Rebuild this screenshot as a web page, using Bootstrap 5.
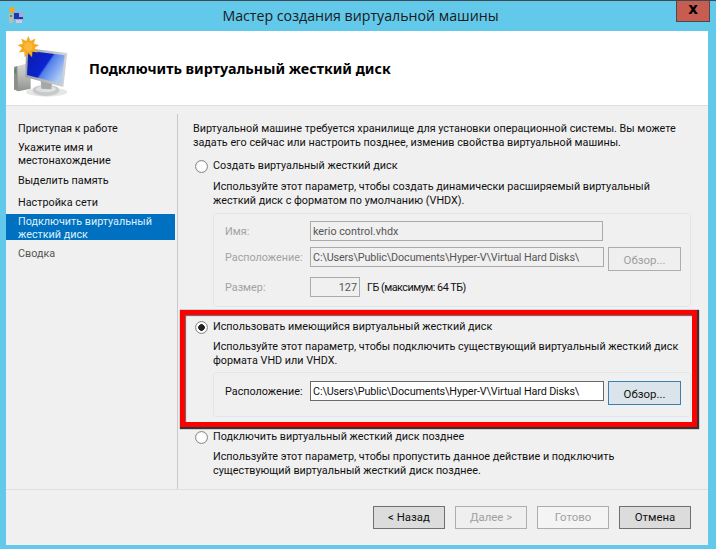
<!doctype html>
<html lang="ru"><head><meta charset="utf-8"><title>Мастер</title>
<link href="https://cdn.jsdelivr.net/npm/bootstrap@5.3.0/dist/css/bootstrap.min.css" rel="stylesheet">
<style>
html,body{height:549px;overflow:hidden}
body{background:#62c9ea;font-family:Roboto,"Noto Sans",sans-serif;font-size:10.8px;line-height:14px;color:#111;border-top:1px solid #3f4a50}
.wiz-title{height:30px;position:relative}
.wiz-title .ttl{font-size:14.2px;line-height:30px;text-align:center;padding-left:5px;color:#1a1a1a;font-family:"Open Sans",sans-serif}
.wiz-ico{position:absolute;left:8px;top:5px}
.wiz-close{position:absolute;left:676px;top:-1px;width:34px;height:22px;background:#c75c50;border:1px solid #4a4a4a;border-top:0;color:#000;font:bold 15px/18px "DejaVu Sans",sans-serif;text-align:center}
.wiz-client{margin:0 8px 0 6px;height:514px;background:#f0f0f0}
.wiz-head{height:75px;background:#fff;border-bottom:1px solid #dfdfdf;padding:2px 0 0 83px;font-family:"Noto Sans",sans-serif;font-size:14.3px;font-weight:700;color:#000}
.wiz-head svg{position:absolute;left:10px;top:32px;filter:blur(.35px)}
.wiz-body{height:383px}
.wiz-side{width:172px;border-right:1px solid #c9c9c9;margin-top:8px;padding-top:8px}
.side-i{padding:0 0 0 12px;margin-bottom:0}
.side-i.two{line-height:13px}
.side-i.on{background:#0070c0;color:#dff0fb;margin-right:2px;height:26px;padding-top:1px}
.side-off{color:#555}
.wiz-main{padding:16px 0 0 15px;width:512px}
.rad{width:13px;height:13px;border-radius:50%;border:1px solid #8a8a8a;background:#fff;flex:none;margin:0 5px 0 2px;box-shadow:inset 0 0 1px #aaa}
.rad.sel{background:radial-gradient(circle,#222 0 3px,#fff 3.6px)}
.optn{height:14px}
.sub{margin-left:20px;white-space:nowrap}
.panel{margin-left:20px;border:1px solid #dfe7ee;border-radius:3px;width:478px}
.pan-a{height:94px;padding:7px 0 0 11px}
.pan-b{height:45px;padding:8px 0 0 11px;line-height:22px}
.dis{color:#a2a2a2;padding-top:1px}
.fld{border:1px solid #ababab;height:20px;line-height:20px;padding:0 2px;background:#f0f0f0;color:#555;white-space:nowrap;overflow:hidden}
.fld.act{border-color:#6a6a6a;background:#fff;color:#111}
.fld.pth{letter-spacing:-.13px}
.lab{width:85px;flex:none}
.w-nm{width:293px}.w-loc{width:294px}.w-sz{width:50px}
.wbtn{width:73px;height:23px;border:1px solid #adadad;background:#efefef;color:#a0a0a0;line-height:21px;text-align:center;flex:none;padding:0;border-radius:0;font-size:11.4px}
.wbtn.en{background:#dcdcdc;border-color:#707070;color:#111}
.wbtn.prim{background:#dbe4ea;border-color:#3c7fb1;color:#111;height:24px;line-height:24px;margin-left:4px}
.wbtn.off2{background:#f4f4f4}
.wbtn.brw{height:24px;line-height:24px;margin:0 0 -4px 4px}
.wiz-foot{height:56px;border-top:1px solid #dfdfdf;padding:16px 0 0 367px;column-gap:10px}
.wiz-foot .wbtn{width:72px}
.redbox{position:absolute;left:180px;top:310px;width:517px;height:117px;border:5px solid #f00;box-shadow:1px 1px 1px 1px #333,inset 1px 1px 1px rgba(0,0,0,.6);pointer-events:none}
.t0{width:495px;white-space:nowrap}
.tight{letter-spacing:-.5px;margin-left:7px;padding-top:1px}
.m4{margin-top:4px}.m5{margin-top:5px}.m6{margin-top:6px}.m7{margin-top:7px}.m8{margin-top:8px}.m9{margin-top:9px}.m10{margin-top:10px}.m13{margin-top:13px}
</style></head><body>
<div class="wiz-title">
<svg class="wiz-ico" width="17" height="18" viewBox="0 0 17 18"><polygon points="4,0 5,2 7,1 6,3 8,4 6,5 7,7 5,6 4,8 3,6 1,7 2,5 0,4 2,3 1,1 3,2" fill="#f5a623"/><rect x="1" y="8" width="4" height="9" fill="#b9bcb8"/><rect x="2" y="9" width="2" height="2" fill="#3d9a4a"/><rect x="5" y="6" width="11" height="8" fill="#9fb0bb"/><rect x="6" y="7" width="9" height="6" fill="#1c35b8"/><rect x="11" y="7" width="4" height="4" fill="#8fb0f0"/><rect x="8" y="14" width="6" height="3" fill="#ccd"/></svg>
<div class="ttl">Мастер создания виртуальной машины</div>
<div class="wiz-close">x</div>
</div>
<div class="wiz-client d-flex flex-column">
<div class="wiz-head d-flex align-items-center">
<svg width="66" height="70" viewBox="0 0 198 210">
<defs>
<linearGradient id="gS" x1="0" y1="0" x2="1" y2=".6"><stop offset="0" stop-color="#0a1aa8"/><stop offset=".55" stop-color="#0b24d0"/><stop offset=".6" stop-color="#4f7de8"/><stop offset="1" stop-color="#aecbf6"/></linearGradient>
<linearGradient id="gB" x1="0" y1="0" x2="1" y2="0"><stop offset="0" stop-color="#9aa0a4"/><stop offset="1" stop-color="#d2d6d8"/></linearGradient>
<linearGradient id="gT" x1="0" y1="0" x2="0" y2="1"><stop offset="0" stop-color="#d8dad6"/><stop offset="1" stop-color="#8f928e"/></linearGradient>
</defs>
<ellipse cx="110" cy="180" rx="62" ry="14" fill="#e6e6e6"/>
<polygon points="12,105 48,95 62,108 62,170 25,178 12,172" fill="url(#gT)"/>
<polygon points="12,105 22,102 24,177 12,172" fill="#8b8e8a"/>
<rect x="14" y="112" width="5" height="12" fill="#4b8a48"/>
<ellipse cx="108" cy="175" rx="40" ry="17" fill="#c6caca"/>
<ellipse cx="108" cy="171" rx="30" ry="10" fill="#dfe1e1"/>
<polygon points="92,145 126,152 124,172 94,170" fill="#a4a8a8"/>
<polygon points="48,48 172,63 160,165 46,136" fill="url(#gB)"/>
<polygon points="55,56 164,70 153,155 51,129" fill="url(#gS)"/>
<polygon points="55,12 61.5,27.1 76.2,19.7 71.5,35.5 87.5,39.3 73.7,48.3 83.6,61.5 67.2,59.6 66.3,76 55,64 43.7,76 42.8,59.6 26.4,61.5 36.3,48.3 22.5,39.3 38.5,35.5 33.8,19.7 48.5,27.1" fill="#f6a821"/>
<circle cx="55" cy="44" r="13" fill="#fbb93a"/>
</svg>
Подключить виртуальный жесткий диск</div>
<div class="wiz-body d-flex">
<div class="wiz-side">
<div class="side-i">Приступая к работе</div>
<div class="side-i two m5">Укажите имя и<br>местонахождение</div>
<div class="side-i m7">Выделить память</div>
<div class="side-i m8">Настройка сети</div>
<div class="side-i two on m4">Подключить виртуальный жесткий диск</div>
<div class="side-i side-off m7">Сводка</div>
</div>
<div class="wiz-main">
<div class="t0">Виртуальной машине требуется хранилище для установки операционной системы. Вы можете<br>задать его сейчас или настроить позднее, изменив свойства виртуальной машины.</div>
<div class="d-flex align-items-center optn m9"><span class="rad"></span>Создать виртуальный жесткий диск</div>
<div class="sub m7">Используйте этот параметр, чтобы создать динамически расширяемый виртуальный<br>жесткий диск с форматом по умолчанию (VHDX).</div>
<div class="panel pan-a m5">
<div class="d-flex align-items-center"><span class="lab dis">Имя:</span><div class="fld w-nm">kerio control.vhdx</div></div>
<div class="d-flex align-items-center m6"><span class="lab dis">Расположение:</span><div class="fld pth w-loc">C:\Users\Public\Documents\Hyper-V\Virtual Hard Disks\</div><div class="wbtn brw">Обзор...</div></div>
<div class="d-flex align-items-center m10"><span class="lab dis">Размер:</span><div class="fld text-end w-sz">127</div><span class="tight">ГБ (максимум: 64 ТБ)</span></div>
</div>
<div class="d-flex align-items-center optn m13"><span class="rad sel"></span>Использовать имеющийся виртуальный жесткий диск</div>
<div class="sub m6">Используйте этот параметр, чтобы подключить существующий виртуальный жесткий диск<br>формата VHD или VHDX.</div>
<div class="panel pan-b d-flex m4">
<span class="lab">Расположение:</span><div class="fld pth act w-loc">C:\Users\Public\Documents\Hyper-V\Virtual Hard Disks\</div><div class="wbtn prim">Обзор...</div></div>
<div class="d-flex align-items-center optn m13"><span class="rad"></span>Подключить виртуальный жесткий диск позднее</div>
<div class="sub m6">Используйте этот параметр, чтобы пропустить данное действие и подключить<br>существующий виртуальный жесткий диск позднее.</div>
</div>
</div>
<div class="wiz-foot d-flex">
<div class="wbtn en">&lt; Назад</div><div class="wbtn">Далее &gt;</div><div class="wbtn off2">Готово</div><div class="wbtn en">Отмена</div>
</div>
</div>
<div class="redbox"></div>
<script src="https://cdn.jsdelivr.net/npm/bootstrap@5.3.0/dist/js/bootstrap.bundle.min.js"></script>
</body></html>
